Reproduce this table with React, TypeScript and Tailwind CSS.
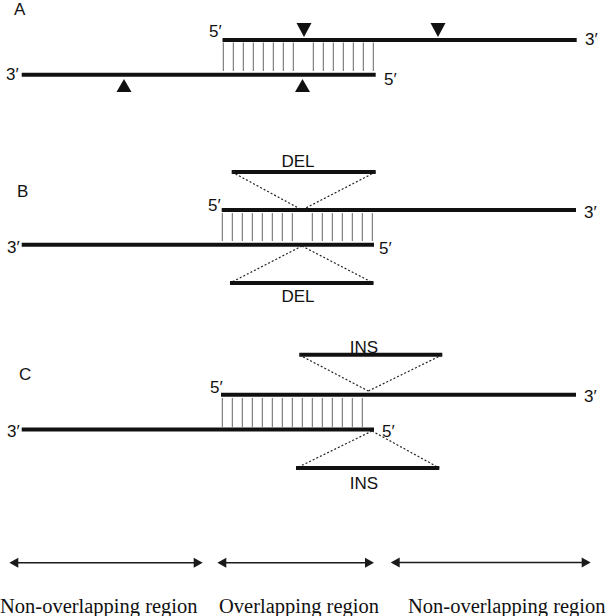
import React from "react";

type Pt = [number, number];

const INK = "#111";
const SANS = "'Liberation Sans', Arial, sans-serif";

const Strand = ({ x1, x2, y }: { x1: number; x2: number; y: number }) => (
  <line x1={x1} x2={x2} y1={y} y2={y} stroke={INK} strokeWidth={4} />
);

const Dotted = ({ a, b }: { a: Pt; b: Pt }) => (
  <line
    x1={a[0]}
    y1={a[1]}
    x2={b[0]}
    y2={b[1]}
    stroke="#222"
    strokeWidth={1.2}
    strokeDasharray="2 2"
  />
);

const Label = ({
  x,
  y,
  children,
}: {
  x: number;
  y: number;
  children: React.ReactNode;
}) => (
  <text x={x} y={y} fontFamily={SANS} fontSize={17} fill={INK}>
    {children}
  </text>
);

const Hatch = ({
  x0,
  count,
  y1,
  y2,
  skip,
}: {
  x0: number;
  count: number;
  y1: number;
  y2: number;
  skip?: number;
}) => (
  <g stroke="#666" strokeWidth={1}>
    {Array.from({ length: count }, (_, i) => i)
      .filter((i) => i !== skip)
      .map((i) => (
        <line key={i} x1={x0 + i * 10} x2={x0 + i * 10} y1={y1} y2={y2} />
      ))}
  </g>
);

const Tri = ({ cx, y, down }: { cx: number; y: number; down?: boolean }) => {
  // y = flat side
  const tip = down ? y + 14 : y - 13;
  return (
    <polygon
      points={`${cx - 7.5},${y} ${cx + 7.5},${y} ${cx},${tip}`}
      fill={INK}
    />
  );
};

const Panel = ({
  top,
  h,
  children,
}: {
  top: number;
  h: number;
  children: React.ReactNode;
}) => (
  <svg
    width={608}
    height={h}
    viewBox={`0 ${top} 608 ${h}`}
    className="block shrink-0"
  >
    {children}
  </svg>
);

const Arrow = ({ x1, x2, y }: { x1: number; x2: number; y: number }) => (
  <g fill="#1a1a1a">
    <line x1={x1 + 6} x2={x2 - 6} y1={y} y2={y} stroke="#1a1a1a" strokeWidth={1.6} />
    <polygon points={`${x1},${y} ${x1 + 9},${y - 5} ${x1 + 9},${y + 5}`} />
    <polygon points={`${x2},${y} ${x2 - 9},${y - 5} ${x2 - 9},${y + 5}`} />
  </g>
);

export default function App() {
  return (
    <div className="w-[608px] h-[616px] bg-white overflow-hidden flex flex-col">
      {/* A: plain overlap with markers */}
      <Panel top={0} h={130}>
        <Label x={14} y={15}>A</Label>
        <Label x={209} y={37}>5′</Label>
        <Label x={585} y={45}>3′</Label>
        <Label x={6} y={80}>3′</Label>
        <Label x={384} y={85}>5′</Label>
        <Hatch x0={223.3} count={16} skip={8} y1={42.5} y2={71} />
        <Strand x1={222.5} x2={576.7} y={40} />
        <Strand x1={21.7} x2={375.7} y={74.8} />
        <Tri cx={304} y={23} down />
        <Tri cx={438} y={23} down />
        <Tri cx={124} y={92} />
        <Tri cx={302.5} y={92} />
      </Panel>

      {/* B: deletions */}
      <Panel top={130} h={185}>
        <Label x={17} y={197}>B</Label>
        <text x={298} y={166.7} textAnchor="middle" fontFamily={SANS} fontSize={17} fill={INK}>
          DEL
        </text>
        <Strand x1={231.7} x2={375.7} y={172} />
        <Dotted a={[232, 172]} b={[302, 210]} />
        <Dotted a={[375.5, 172]} b={[302, 210]} />
        <Label x={208} y={211}>5′</Label>
        <Label x={584} y={218}>3′</Label>
        <Hatch x0={222.3} count={16} skip={8} y1={213} y2={241} />
        <Strand x1={221.7} x2={576} y={210} />
        <Strand x1={21.7} x2={374} y={244.7} />
        <Label x={7} y={253}>3′</Label>
        <Label x={379} y={253.5}>5′</Label>
        <Dotted a={[302, 246]} b={[230, 283]} />
        <Dotted a={[302, 246]} b={[373.3, 283]} />
        <Strand x1={230} x2={373.5} y={283} />
        <text x={298} y={301.5} textAnchor="middle" fontFamily={SANS} fontSize={17} fill={INK}>
          DEL
        </text>
      </Panel>

      {/* C: insertions */}
      <Panel top={315} h={200}>
        <Label x={19} y={380}>C</Label>
        <text x={364} y={353.3} textAnchor="middle" fontFamily={SANS} fontSize={17} fill={INK}>
          INS
        </text>
        <Strand x1={299.3} x2={442.3} y={354.7} />
        <Dotted a={[299.5, 355]} b={[368.3, 391]} />
        <Dotted a={[442, 355]} b={[368.3, 391]} />
        <Label x={210} y={393.3}>5′</Label>
        <Label x={584} y={402}>3′</Label>
        <Hatch x0={222.3} count={15} y1={398} y2={427} />
        <Strand x1={221} x2={576} y={394.7} />
        <Strand x1={21.7} x2={374} y={429.5} />
        <Label x={7} y={437}>3′</Label>
        <Label x={382} y={436.7}>5′</Label>
        <Dotted a={[372, 431]} b={[296.5, 468]} />
        <Dotted a={[372, 431]} b={[439.3, 468]} />
        <Strand x1={296} x2={439.3} y={468} />
        <text x={364} y={489} textAnchor="middle" fontFamily={SANS} fontSize={17} fill={INK}>
          INS
        </text>
      </Panel>

      {/* region arrows */}
      <Panel top={515} h={81}>
        <Arrow x1={9.3} x2={202.7} y={562.7} />
        <Arrow x1={217.3} x2={374} y={562.7} />
        <Arrow x1={390.7} x2={590.7} y={562.5} />
      </Panel>

      <div className="flex whitespace-nowrap font-['Liberation_Serif','Times_New_Roman',serif] text-[20.5px] leading-none text-[#111]">
        <div className="w-[219px] shrink-0">Non-overlapping region</div>
        <div className="w-[189px] shrink-0">Overlapping region</div>
        <div className="shrink-0">Non-overlapping region</div>
      </div>
    </div>
  );
}
